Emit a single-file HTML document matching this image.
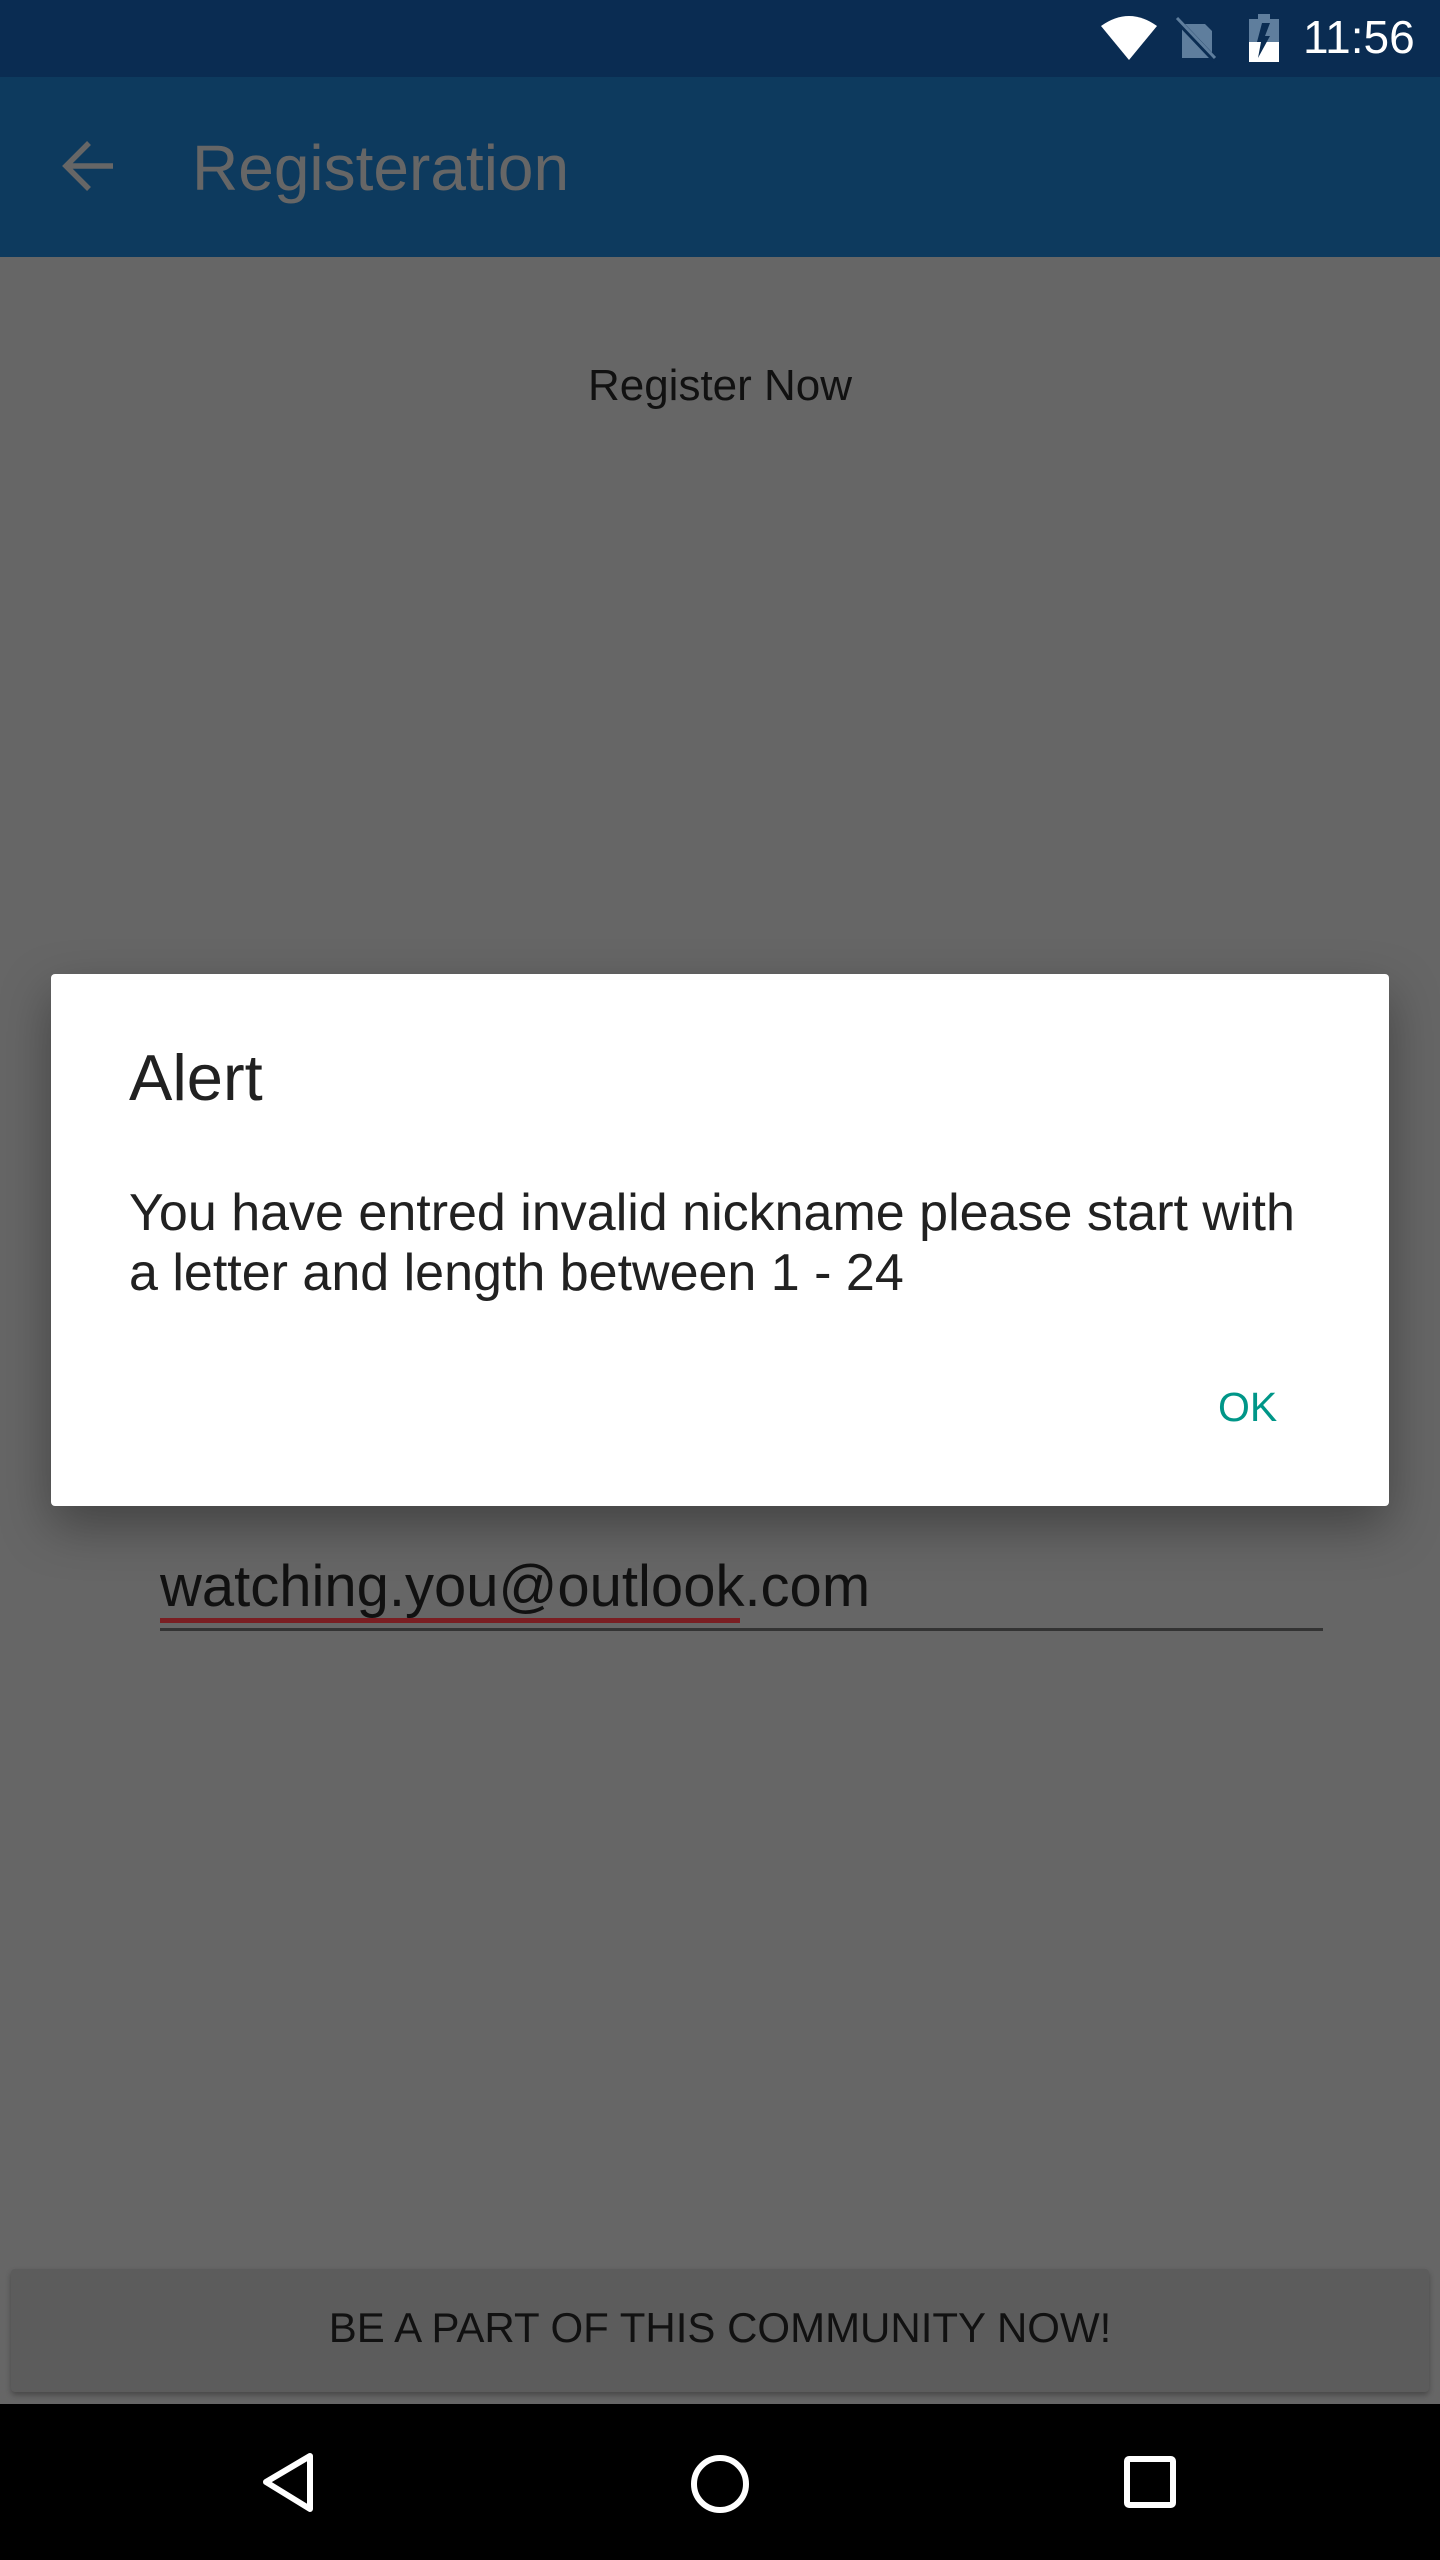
<!DOCTYPE html>
<html><head><meta charset="utf-8"><style>
*{margin:0;padding:0;box-sizing:border-box}
body{width:1440px;height:2560px;position:relative;background:#666;font-family:"Liberation Sans",sans-serif;overflow:hidden}
.abs{position:absolute}
</style></head><body>
<div class="abs" style="left:0;top:0;width:1440px;height:77px;background:#0a2c52"></div>
<div class="abs" style="left:0;top:77px;width:1440px;height:180px;background:#0d3a5e"></div>
<!-- status icons -->
<svg class="abs" style="left:1100px;top:14px" width="60" height="48" viewBox="0 0 60 48"><path d="M1 12 Q29 -8 57 12 L29 46 Z" fill="#fff"/></svg>
<svg class="abs" style="left:1175px;top:16px" width="45" height="46" viewBox="0 0 45 46"><path d="M7 8 L30 8 L37 15 L37 42 L7 42 Z" fill="#5f7e9d"/><path d="M2 4 L40 44" stroke="#0a2c52" stroke-width="6"/><path d="M2 2 L40 42" stroke="#5f7e9d" stroke-width="3"/></svg>
<svg class="abs" style="left:1248px;top:14px" width="32" height="50" viewBox="0 0 32 50"><rect x="10" y="0" width="12" height="5" fill="#5f7e9d"/><rect x="1" y="5" width="30" height="23" fill="#5f7e9d"/><rect x="1" y="28" width="30" height="20" fill="#fff"/><path d="M14 9 L22 9 L17 22 L22 22 L10 44 L13 28 L9 28 Z" fill="#0a2c52"/></svg>
<div class="abs" style="left:1303px;top:10px;font-size:46px;color:#fff">11:56</div>
<!-- app bar -->
<svg class="abs" style="left:58px;top:136px" width="60" height="60" viewBox="0 0 60 60"><path d="M55 30 L8 30 M31 7 L8 30 L31 53" stroke="#666" stroke-width="5.5" fill="none"/></svg>
<div class="abs" style="left:192px;top:131px;font-size:64px;color:#666">Registeration</div>
<div class="abs" style="left:0;width:1440px;top:361px;text-align:center;font-size:44px;color:#111">Register Now</div>
<!-- email field -->
<div class="abs" style="left:160px;top:1553px;font-size:58px;color:#111">watching.you@outlook.com</div>
<div class="abs" style="left:160px;top:1618px;width:580px;height:5px;background:#7a1e22"></div>
<div class="abs" style="left:160px;top:1628px;width:1163px;height:3px;background:#333"></div>
<!-- dialog -->
<div class="abs" style="left:51px;top:974px;width:1338px;height:532px;background:#fff;border-radius:4px;box-shadow:0 20px 50px rgba(0,0,0,.35)"></div>
<div class="abs" style="left:129px;top:1040px;font-size:65px;color:#212121">Alert</div>
<div class="abs" style="left:129px;top:1183px;font-size:52px;line-height:60px;color:#212121;width:1260px;white-space:nowrap">You have entred invalid nickname please start with<br>a letter and length between 1 - 24</div>
<div class="abs" style="left:1218px;top:1384px;font-size:41px;color:#009688">OK</div>
<!-- bottom button -->
<div class="abs" style="left:11px;top:2269px;width:1418px;height:123px;background:#5c5c5c;border-radius:4px;box-shadow:0 3px 6px rgba(0,0,0,.3)"></div>
<div class="abs" style="left:0;width:1440px;top:2304px;text-align:center;font-size:42px;color:#111">BE A PART OF THIS COMMUNITY NOW!</div>
<!-- nav bar -->
<div class="abs" style="left:0;top:2404px;width:1440px;height:156px;background:#000"></div>
<svg class="abs" style="left:260px;top:2451px" width="60" height="64" viewBox="0 0 60 64"><path d="M50 5 L50 58 L6 31 Z" stroke="#fff" stroke-width="6" fill="none" stroke-linejoin="round"/></svg>
<svg class="abs" style="left:688px;top:2452px" width="64" height="64" viewBox="0 0 64 64"><circle cx="32" cy="32" r="26" stroke="#fff" stroke-width="6" fill="none"/></svg>
<svg class="abs" style="left:1123px;top:2455px" width="56" height="56" viewBox="0 0 56 56"><rect x="4" y="4" width="46" height="46" stroke="#fff" stroke-width="6" fill="none" rx="2"/></svg>
</body></html>
